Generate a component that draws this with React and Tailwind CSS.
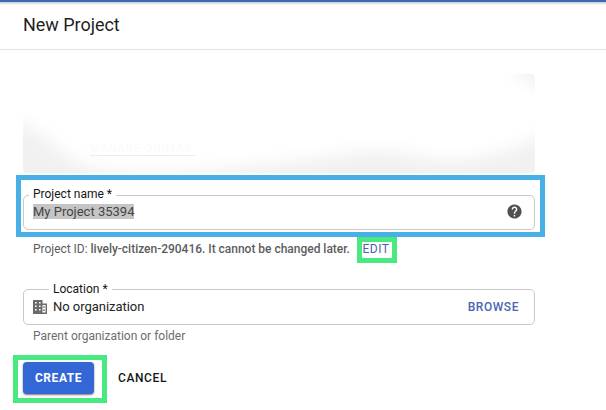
import React from "react";
import { MdHelp } from "react-icons/md";

function Field({ label, labelClass, className, children }) {
  return (
    <div className={"relative w-[512px] rounded-[5px] border border-[#c9c9cb] bg-white " + className}>
      <span className={"absolute bg-white px-1 text-[12px] leading-4 whitespace-nowrap text-[#161616] " + labelClass}>
        {label}
      </span>
      {children}
    </div>
  );
}

function OrganizationIcon() {
  return (
    <svg className="h-[14px] w-[14px]" viewBox="0 0 14 14" fill="#6a6a6a" fillRule="evenodd">
      <path d="M0 0h9.5v3.5H14V14H0ZM2 2v1.6h1.6v-1.6ZM6 2v1.6h1.6v-1.6ZM2 5.4v1.6h1.6v-1.6ZM6 5.4v1.6h1.6v-1.6ZM2 9v1.6h1.6V9ZM6 9v1.6h1.6V9ZM9.5 5v7.6h3.1V5Z" />
      <path d="M10.3 6.3h1.5v1.5h-1.5ZM10.3 9.4h1.5v1.5h-1.5Z" />
    </svg>
  );
}

function Banner() {
  return (
    <div className="relative mt-6 h-[99px] w-[512px] overflow-hidden rounded-[4px] bg-[#f1f1f2]">
      <svg className="absolute inset-0" width="512" height="99" viewBox="0 0 512 99">
        <defs>
          <filter id="soft" x="-10%" y="-30%" width="120%" height="160%">
            <feGaussianBlur stdDeviation="8" />
          </filter>
        </defs>
        <path
          d="M-30-40H488L496 4 532 18 532 54C505 70 475 84 430 86 395 86 375 74 345 77 320 80 300 84 265 88 215 92 190 98 145 99 90 100 60 96 42 80 24 62 10 52-30 38Z"
          fill="#fff"
          filter="url(#soft)"
        />
      </svg>
      <span className="absolute top-[67px] left-[67px] h-[15px] w-[106px] border-b border-[#ededed] text-[11px] leading-[16px] font-medium tracking-[0.9px] whitespace-nowrap text-[#fbfbfb]">
        MANAGE QUOTAS
      </span>
    </div>
  );
}

export default function App() {
  return (
    <div className="h-[410px] w-[606px] overflow-hidden bg-white font-[Roboto,sans-serif]">
      <header className="flex h-[50px] items-center border-t-2 border-b border-t-[#4069ad] border-b-[#e4e4e4] pb-[1px] pl-[23px] shadow-[inset_0_4px_3px_-3px_#a9bad6]">
        <h1 className="text-[18px] leading-6 tracking-[-0.04px] text-[#1f1f1f]">New Project</h1>
      </header>

      <main className="pl-[23px]">
        <Banner />

        <div className="relative mt-[22px]">
          <Field label="Project name *" labelClass="left-[5px] -top-[10px]" className="flex h-[35px] items-center justify-between pr-[11px] pl-[9px]">
            <span className="-mt-[3px] bg-[#c5c5c5] text-[13px] leading-[15px] text-[#444]">My Project 35394</span>
            <MdHelp className="-mt-[2px] size-[17px] text-[#505050]" />
          </Field>
          <div className="absolute -top-[20px] -left-[7px] h-[62px] w-[529px] border-[5px] border-[#48b0e7]" />
        </div>

        <div className="mt-[7px] flex h-[26px] items-center pl-[10px] text-[12px] leading-4 text-[#5c5d60]">
          <p className="-mt-[2px] w-[324px] tracking-[-0.02px] whitespace-nowrap">
            Project ID: <span className="font-medium">lively-citizen-290416. It cannot be changed later.</span>
          </p>
          <button className="flex h-[26px] w-[40px] items-center border-[5px] border-[#48e980] pl-[0.5px] text-[12px] leading-3 tracking-[0.5px] whitespace-nowrap text-[#4b5fb5]">
            <span className="-mt-[2px]">EDIT</span>
          </button>
        </div>

        <Field label="Location *" labelClass="left-[25px] -top-[9px]" className="mt-[26px] flex h-[36px] items-center pr-[15px] pl-[9px]">
          <OrganizationIcon />
          <span className="ml-[6px] text-[13px] leading-4 tracking-[-0.03px] text-[#222]">No organization</span>
          <button className="ml-auto text-[12px] leading-4 font-medium tracking-[0.55px] text-[#4b66b3]">BROWSE</button>
        </Field>
        <p className="mt-[3px] pl-[10px] text-[12px] leading-4 text-[#6c6d70]">Parent organization or folder</p>

        <div className="mt-[18px] flex items-center">
          <div className="relative">
            <button className="block h-[32px] w-[71px] rounded-[4px] bg-[#3367d6] text-[12px] font-bold tracking-[0.55px] text-white shadow-[0_1px_2px_#777]">CREATE</button>
            <div className="absolute -top-[7px] -left-[10px] h-[48px] w-[94px] border-[5px] border-[#48e980]" />
          </div>
          <button className="ml-[24px] text-[12px] leading-4 font-medium tracking-[0.6px] text-[#161616]">CANCEL</button>
        </div>
      </main>
    </div>
  );
}
